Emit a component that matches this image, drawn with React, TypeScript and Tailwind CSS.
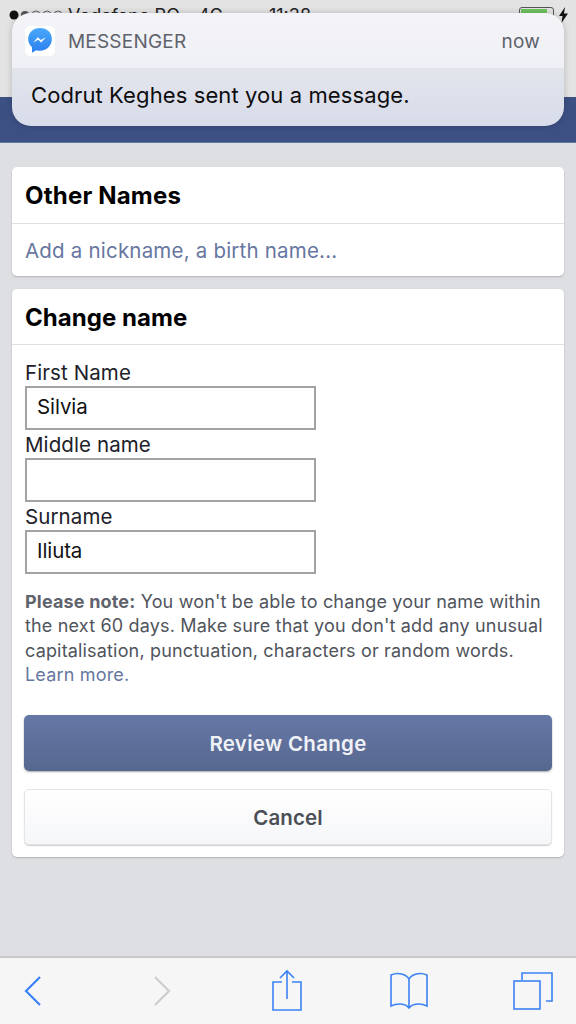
const FONT = "font-['Inter','Noto_Sans',sans-serif]";

function Field({ label, value }: { label: string; value: string }) {
  return (
    <div className="flex flex-col">
      <label className="h-[28px] text-[20.5px] leading-[29px] text-[#1d2129] tracking-[0.1px]">{label}</label>
      <div className="h-[44px] w-[291px] border-2 border-[#a3a3a3] pl-[10px] text-[20.5px] leading-[38px] text-[#111] tracking-[-0.1px]">
        {value}
      </div>
    </div>
  );
}

function MessengerIcon() {
  return (
    <div className="flex h-[30px] w-[30px] items-center justify-center rounded-[5px] bg-white">
      <svg width="26" height="28" viewBox="0 0 24 26">
        <defs>
          <linearGradient id="msgr" x1="0" y1="0" x2="0" y2="1">
            <stop offset="0" stopColor="#4aa8f8" />
            <stop offset="1" stopColor="#2a7ff0" />
          </linearGradient>
        </defs>
        <path d="M12 1C5.6 1 1 5.5 1 11.2c0 3.1 1.4 5.8 3.6 7.6V24l4-2.4c1.1.3 2.2.5 3.4.5 6.4 0 11-4.8 11-10.9S18.4 1 12 1z" fill="url(#msgr)" />
        <path d="M5.5 14.5l4.6-4.9 2.6 2.5 4.9-2.5-4.6 4.9-2.6-2.6z" fill="#fff" />
      </svg>
    </div>
  );
}

function StatusBar() {
  return (
    <div className="flex h-[30px] items-center text-[18px] text-[#222]">
      <svg className="ml-[9px]" width="54" height="10" viewBox="0 0 54 10">
        <circle cx="5" cy="5" r="4.5" fill="#111" />
        <circle cx="16" cy="5" r="4" fill="#555" />
        <circle cx="27" cy="5" r="4" fill="none" stroke="#666" />
        <circle cx="38" cy="5" r="4" fill="none" stroke="#666" />
        <circle cx="49" cy="5" r="4" fill="none" stroke="#666" />
      </svg>
      <span className="ml-[5px]">Vodafone RO</span>
      <span className="ml-[18px]">4G</span>
      <span className="ml-[46px]">11:38</span>
      <div className="ml-auto h-[16px] w-[35px] rounded-[3px] border border-[#555] p-[1px]">
        <div className="h-full w-[26px] bg-[#6cc35f]" />
      </div>
      <svg className="ml-[5px] mr-[8px]" width="9" height="16" viewBox="0 0 9 16">
        <path d="M6 0L0 9h3.5L2.5 16 9 6.5H5z" fill="#111" />
      </svg>
    </div>
  );
}

function Toolbar() {
  return (
    <div className="flex h-[68px] items-center border-t-2 border-[#c9c9cb] bg-[#f6f6f6]">
      <svg className="ml-[22px]" width="20" height="32" viewBox="0 0 20 32" fill="none" stroke="#3b82f6" strokeWidth="2.2">
        <path d="M18 2L4 16l14 14" />
      </svg>
      <svg className="ml-[109px]" width="20" height="32" viewBox="0 0 20 32" fill="none" stroke="#cdcdcd" strokeWidth="2.2">
        <path d="M4 2l14 14L4 30" />
      </svg>
      <svg className="ml-[100px]" width="32" height="44" viewBox="0 0 32 44" fill="none" stroke="#3b82f6" strokeWidth="1.6">
        <path d="M11 13H2v28h28V13h-9" />
        <path d="M16 30V2M9 9l7-7 7 7" />
      </svg>
      <svg className="ml-[86px]" width="40" height="40" viewBox="0 0 40 40" fill="none" stroke="#3b82f6" strokeWidth="1.6">
        <path d="M20 8C17 3 9 1 2 4v31c6-3 14-3 18 2 4-5 12-5 18-2V4c-7-3-15-1-18 4zM20 8v29" />
      </svg>
      <svg className="ml-[84px]" width="40" height="40" viewBox="0 0 40 40" fill="none" stroke="#3b82f6" strokeWidth="1.6">
        <path d="M9 9V2h30v28h-6" />
        <rect x="1" y="10" width="26" height="28" />
      </svg>
    </div>
  );
}

export default function App() {
  return (
    <div className={`relative flex h-[1024px] w-[576px] flex-col overflow-hidden bg-[#dddfe3] ${FONT}`}>
      {/* status bar + blue header */}
      <div className="h-[97px] bg-[#e3e3e4]">
        <StatusBar />
      </div>
      <div className="h-[46px] border-b border-[#5f78a8] bg-[#3c5084]" />

      <main className="flex flex-col gap-[13px] px-[12px] pt-[24px]">
        <section className="rounded-[5px] bg-white shadow-[0_1px_2px_rgba(0,0,0,0.2)]">
          <h2 className="flex h-[57px] items-center border-b border-[#dfe0e4] pl-[13px] pt-[2px] text-[24px] font-bold tracking-[0.2px] text-black">
            Other Names
          </h2>
          <div className="flex h-[52px] items-center pl-[13px] pt-[2px] text-[20.5px] tracking-[0.2px] text-[#67779f]">
            Add a nickname, a birth name...
          </div>
        </section>

        <section className="h-[568px] rounded-[5px] bg-white shadow-[0_1px_2px_rgba(0,0,0,0.2)]">
          <h2 className="flex h-[56px] items-center border-b border-[#dfe0e4] pl-[13px] pt-[2px] text-[24px] font-bold tracking-[0.05px] text-black">
            Change name
          </h2>
          <div className="px-[13px] pt-[13px]">
            <Field label="First Name" value="Silvia" />
            <Field label="Middle name" value="" />
            <Field label="Surname" value="Iliuta" />
            <p className="mt-[16px] text-[18px] leading-[24.4px] tracking-[0.17px] text-[#50545c]">
              <b className="font-bold text-[#5f636b]">Please note:</b> You won't be able to change your name within the next 60 days. Make sure that you don't add any unusual capitalisation, punctuation, characters or random words.{" "}
              <span className="text-[#67779f]">Learn more.</span>
            </p>
          </div>
          <div className="mt-[27px] flex flex-col gap-[18px] px-[12px]">
            <button className="h-[56px] rounded-[5px] bg-gradient-to-b from-[#6577a6] to-[#57688f] pt-[3px] text-[20.5px] font-semibold tracking-[0.3px] text-[#f0f2f7] shadow-[0_1px_2px_rgba(0,0,0,0.35)]">
              Review Change
            </button>
            <button className="h-[56px] rounded-[5px] border border-[#e3e4e7] bg-gradient-to-b from-white to-[#f5f6f8] pt-[3px] text-[20.5px] font-semibold tracking-[0.1px] text-[#4b4f56] shadow-[0_1px_1px_rgba(0,0,0,0.2)]">
              Cancel
            </button>
          </div>
        </section>
      </main>

      <div className="mt-auto">
        <Toolbar />
      </div>

      {/* notification banner */}
      <div className="absolute left-[12px] top-[13px] h-[113px] w-[552px] overflow-hidden rounded-[19px] shadow-[0_0_6px_rgba(0,0,0,0.2)]">
        <div className="flex h-[55px] items-center bg-gradient-to-b from-[#f4f4f8] to-[#eff0f5] pl-[13px] pr-[24px]">
          <MessengerIcon />
          <span className="ml-[13px] pt-[3px] text-[19px] tracking-[0.2px] text-[#5e626c]">MESSENGER</span>
          <span className="ml-auto pt-[3px] text-[19px] tracking-[0.2px] text-[#5e626c]">now</span>
        </div>
        <div className="flex h-[58px] items-start bg-gradient-to-b from-[#e3e5ec] to-[#d8dcea] pl-[19px] pt-[11px] text-[22px] tracking-[0.1px] text-[#0d0d0f]">
          Codrut Keghes sent you a message.
        </div>
      </div>
    </div>
  );
}
